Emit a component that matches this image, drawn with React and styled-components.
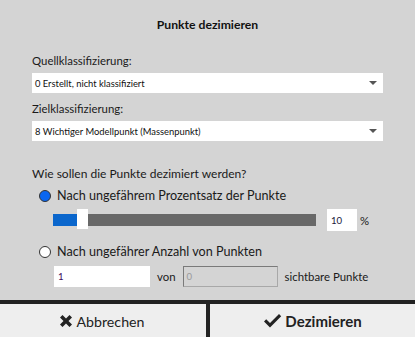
import React from "react";
import styled, { createGlobalStyle } from "styled-components";

const Global = createGlobalStyle`
  html, body { margin: 0; padding: 0; background: #d4d4d4; }
  body { font-family: Lato, "Open Sans", sans-serif; color: #1a1a1a; }
`;

const Dialog = styled.div`
  width: 415px;
  height: 337px;
  display: flex;
  flex-direction: column;
  background: #d4d4d4;
  overflow: hidden;
`;

const Body = styled.div`
  flex: 1;
  min-height: 0;
  padding: 0 32px;
  display: flex;
  flex-direction: column;
`;

const Title = styled.div`
  text-align: center;
  font-weight: 700;
  font-size: 12.2px;
  line-height: 18px;
  margin-top: 16px;
  color: #111;
`;

const Label = styled.div`
  font-size: ${(p) => p.$size || 11.4}px;
  line-height: 18px;
  margin-top: ${(p) => p.$mt}px;
  color: #1a1a1a;
  white-space: nowrap;
`;

const Select = styled.div`
  margin-top: 3px;
  height: 20px;
  width: 351px;
  background: #fff;
  display: flex;
  align-items: center;
  justify-content: space-between;
  padding: 0 3px;
  box-sizing: border-box;
  font-size: 9.4px;
  color: #111;
`;

const Arrow = styled.span`
  width: 0;
  height: 0;
  border-left: 4px solid transparent;
  border-right: 4px solid transparent;
  border-top: 4px solid #555;
  margin-right: 3px;
`;

const RadioRow = styled.label`
  display: flex;
  align-items: center;
  gap: 6px;
  margin-top: ${(p) => p.$mt}px;
  margin-left: 7px;
  font-size: 12.6px;
  line-height: 18px;
  white-space: nowrap;
`;

const Dot = styled.span`
  width: 12px;
  height: 12px;
  box-sizing: border-box;
  border-radius: 50%;
  border: 1px solid #333;
  background: ${(p) => (p.$on ? "#0a66f0" : "#fff")};
`;

const SliderRow = styled.div`
  display: flex;
  align-items: center;
  margin-top: ${(p) => p.$mt}px;
  margin-left: 21px;
  height: 22px;
`;

const Track = styled.div`
  position: relative;
  width: 263px;
  height: 12px;
  background: #686868;
`;

const Fill = styled.div`
  height: 100%;
  background: #0a66cc;
`;

const Thumb = styled.div`
  position: absolute;
  top: -5px;
  width: 11px;
  height: 20px;
  background: #fff;
`;

const SmallInput = styled.div`
  flex: none;
  width: ${(p) => p.$w}px;
  height: ${(p) => p.$h}px;
  box-sizing: border-box;
  background: ${(p) => (p.$disabled ? "#d4d4d4" : "#fff")};
  border: ${(p) => (p.$disabled ? "1px solid #a8a8a8" : "none")};
  border-top-color: ${(p) => (p.$disabled ? "#7a7a7a" : "transparent")};
  border-left-color: ${(p) => (p.$disabled ? "#7a7a7a" : "transparent")};
  color: ${(p) => (p.$disabled ? "#9a9a9a" : p.$color || "#1a1a3a")};
  font-size: 9.6px;
  display: flex;
  align-items: center;
  padding-left: ${(p) => (p.$disabled ? 3 : 4)}px;
  margin-left: ${(p) => p.$ml || 0}px;
`;

const Unit = styled.span`
  font-size: 11.4px;
  margin-left: ${(p) => p.$ml}px;
  white-space: nowrap;
`;

const InputRow = styled.div`
  display: flex;
  align-items: center;
  margin-top: ${(p) => p.$mt}px;
  margin-left: 22px;
`;

const Footer = styled.div`
  flex: none;
  height: 33px;
  border-top: 4px solid #222;
  display: flex;
  background: #222;
`;

const Button = styled.button`
  flex: ${(p) => (p.$primary ? "0 0 205px" : "0 0 206px")};
  margin-left: ${(p) => (p.$primary ? "4px" : "0")};
  border: none;
  background: #eeeeee;
  display: flex;
  align-items: center;
  justify-content: center;
  gap: 3px;
  font-family: Lato, "Open Sans", sans-serif;
  font-size: ${(p) => (p.$primary ? 15 : 14.2)}px;
  font-weight: ${(p) => (p.$primary ? 700 : 400)};
  color: #222;
  padding: 0;
  padding-top: 1px;
`;

const XIcon = () => (
  <svg width="16" height="16" viewBox="0 0 16 16" style={{ marginLeft: -4 }}>
    <path d="M2 4.5 L4.5 2 L8 5.5 L11.5 2 L14 4.5 L10.5 8 L14 11.5 L11.5 14 L8 10.5 L4.5 14 L2 11.5 L5.5 8 Z" fill="#222" />
  </svg>
);

const CheckIcon = () => (
  <svg width="19" height="16" viewBox="0 0 19 16">
    <path d="M1 8.5 L3.2 6.3 L7 10 L16 1 L18.2 3.2 L7 14.4 Z" fill="#222" />
  </svg>
);

export default function App() {
  return (
    <>
      <Global />
      <Dialog>
        <Body>
          <Title>Punkte dezimieren</Title>
          <Label $mt={18}>Quellklassifizierung:</Label>
          <Select>
            <span>0 Erstellt, nicht klassifiziert</span>
            <Arrow />
          </Select>
          <Label $mt={7}>Zielklassifizierung:</Label>
          <Select>
            <span>8 Wichtiger Modellpunkt (Massenpunkt)</span>
            <Arrow />
          </Select>
          <Label $mt={24} $size={12}>Wie sollen die Punkte dezimiert werden?</Label>
          <RadioRow $mt={4}>
            <Dot $on />
            Nach ungefährem Prozentsatz der Punkte
          </RadioRow>
          <SliderRow $mt={4}>
            <Track>
              <Fill style={{ width: "24px" }} />
              <Thumb style={{ left: "24px" }} />
            </Track>
            <SmallInput $w={30} $h={22} $ml={11}>10</SmallInput>
            <Unit $ml={3}>%</Unit>
          </SliderRow>
          <RadioRow $mt={12}>
            <Dot />
            Nach ungefährer Anzahl von Punkten
          </RadioRow>
          <InputRow $mt={5}>
            <SmallInput $w={96} $h={21} $color="#3a0a5a">1</SmallInput>
            <Unit $ml={7}>von</Unit>
            <SmallInput $w={95} $h={21} $ml={7} $disabled>0</SmallInput>
            <Unit $ml={7}>sichtbare Punkte</Unit>
          </InputRow>
        </Body>
        <Footer>
          <Button>
            <XIcon />
            Abbrechen
          </Button>
          <Button $primary>
            <CheckIcon />
            Dezimieren
          </Button>
        </Footer>
      </Dialog>
    </>
  );
}
